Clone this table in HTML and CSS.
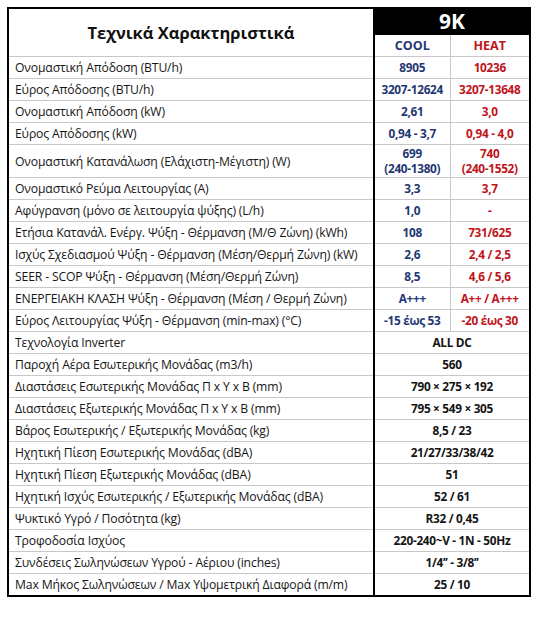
FILE: index.html
```html
<!DOCTYPE html>
<html lang="el">
<head>
<meta charset="utf-8">
<link rel="stylesheet" href="styles.css">
</head>
<body>
<table class="spec">
  <colgroup><col class="c-label"><col class="c-cool"><col class="c-heat"></colgroup>
  <thead>
    <tr class="h1">
      <th class="title" rowspan="2">Τεχνικά Χαρακτηριστικά</th>
      <th class="model" colspan="2">9K</th>
    </tr>
    <tr class="h2">
      <th class="cool mode">COOL</th>
      <th class="heat mode">HEAT</th>
    </tr>
  </thead>
  <tbody>
    <tr><td>Ονομαστική Απόδοση (BTU/h)</td><td class="cool">8905</td><td class="heat">10236</td></tr>
    <tr><td>Εύρος Απόδοσης (BTU/h)</td><td class="cool">3207-12624</td><td class="heat">3207-13648</td></tr>
    <tr><td>Ονομαστική Απόδοση (kW)</td><td class="cool">2,61</td><td class="heat">3,0</td></tr>
    <tr><td>Εύρος Απόδοσης (kW)</td><td class="cool">0,94 - 3,7</td><td class="heat">0,94 - 4,0</td></tr>
    <tr class="tall"><td>Ονομαστική Κατανάλωση (Ελάχιστη-Μέγιστη) (W)</td><td class="cool">699<br>(240-1380)</td><td class="heat">740<br>(240-1552)</td></tr>
    <tr><td>Ονομαστικό Ρεύμα Λειτουργίας (A)</td><td class="cool">3,3</td><td class="heat">3,7</td></tr>
    <tr><td>Αφύγρανση (μόνο σε λειτουργία ψύξης) (L/h)</td><td class="cool">1,0</td><td class="heat">-</td></tr>
    <tr><td>Ετήσια Κατανάλ. Ενέργ. Ψύξη - Θέρμανση (Μ/Θ Ζώνη) (kWh)</td><td class="cool">108</td><td class="heat">731/625</td></tr>
    <tr><td>Ισχύς Σχεδιασμού Ψύξη - Θέρμανση (Μέση/Θερμή Ζώνη) (kW)</td><td class="cool">2,6</td><td class="heat">2,4 / 2,5</td></tr>
    <tr><td>SEER - SCOP Ψύξη - Θέρμανση (Μέση/Θερμή Ζώνη)</td><td class="cool">8,5</td><td class="heat">4,6 / 5,6</td></tr>
    <tr><td>ΕΝΕΡΓΕΙΑΚΗ ΚΛΑΣΗ Ψύξη - Θέρμανση (Μέση / Θερμή Ζώνη)</td><td class="cool">A+++</td><td class="heat">A++ / A+++</td></tr>
    <tr><td>Εύρος Λειτουργίας Ψύξη - Θέρμανση (min-max) (°C)</td><td class="cool">-15 έως 53</td><td class="heat">-20 έως 30</td></tr>
    <tr><td>Τεχνολογία Inverter</td><td class="both" colspan="2">ALL DC</td></tr>
    <tr><td>Παροχή Αέρα Εσωτερικής Μονάδας (m3/h)</td><td class="both" colspan="2">560</td></tr>
    <tr><td>Διαστάσεις Εσωτερικής Μονάδας Π x Υ x Β (mm)</td><td class="both" colspan="2">790 × 275 × 192</td></tr>
    <tr><td>Διαστάσεις Εξωτερικής Μονάδας Π x Υ x Β (mm)</td><td class="both" colspan="2">795 × 549 × 305</td></tr>
    <tr><td>Βάρος Εσωτερικής / Εξωτερικής Μονάδας (kg)</td><td class="both" colspan="2">8,5 / 23</td></tr>
    <tr><td>Ηχητική Πίεση Εσωτερικής Μονάδας (dBA)</td><td class="both" colspan="2">21/27/33/38/42</td></tr>
    <tr><td>Ηχητική Πίεση Εξωτερικής Μονάδας (dBA)</td><td class="both" colspan="2">51</td></tr>
    <tr><td>Ηχητική Ισχύς Εσωτερικής / Εξωτερικής Μονάδας (dBA)</td><td class="both" colspan="2">52 / 61</td></tr>
    <tr><td>Ψυκτικό Υγρό / Ποσότητα (kg)</td><td class="both" colspan="2">R32 / 0,45</td></tr>
    <tr><td>Τροφοδοσία Ισχύος</td><td class="both" colspan="2">220-240~V - 1N - 50Hz</td></tr>
    <tr><td>Συνδέσεις Σωληνώσεων Υγρού - Αέριου (inches)</td><td class="both" colspan="2">1/4’’ - 3/8’’</td></tr>
    <tr><td>Max Μήκος Σωληνώσεων / Max Υψομετρική Διαφορά (m/m)</td><td class="both" colspan="2">25 / 10</td></tr>
  </tbody>
</table>
</body>
</html>
```

FILE: styles.css
```css
html, body {
  margin: 0;
  padding: 0;
  background: #ffffff;
}
body {
  padding: 7px 0 0 7px;
  font-family: "Open Sans", "Noto Sans", sans-serif;
  color: #1a1a1a;
}
.spec {
  border-collapse: collapse;
  width: 522px;
  table-layout: fixed;
  border: 2px solid #000;
}
.c-label { width: 366px; }
.c-cool { width: 76px; }
.c-heat { width: 80px; }

.spec td, .spec th {
  border: 1px solid #c8c8c8;
  padding: 0;
  height: 21px;
  line-height: 15px;
}
.spec td:first-child, .spec th.title {
  border-right: 2px solid #000;
}
.spec td:first-child {
  border-left: 2px solid #000;
  font-size: 12.2px;
  padding-left: 6px;
  white-space: nowrap;
  letter-spacing: -0.15px;
  color: #161616;
}
.spec tr:last-child td {
  border-bottom: 2px solid #000;
}
.title {
  font-size: 16.5px;
  font-weight: 700;
  text-align: center;
  color: #111;
  border-left: 2px solid #000;
}
.h1 .model {
  background: #000;
  color: #fff;
  font-size: 21px;
  font-weight: 700;
  height: 25px;
  line-height: 25px;
  text-align: center;
  border-color: #000;
}
.h2 th {
  height: 21px;
  font-size: 13px;
  font-weight: 700;
}
.spec td:last-child, .spec th.model, .spec th.heat {
  border-right: 2px solid #000;
}
.cool, .heat, .both {
  text-align: center;
  font-weight: 700;
  font-size: 11.8px;
  letter-spacing: -0.3px;
}
.cool { color: #1f3873; }
.heat { color: #c0141b; }
.both { color: #151515; }
.h2 th.cool, .h2 th.heat { font-size: 12.5px; letter-spacing: 0; }
.tall td { height: 32px; }
```
